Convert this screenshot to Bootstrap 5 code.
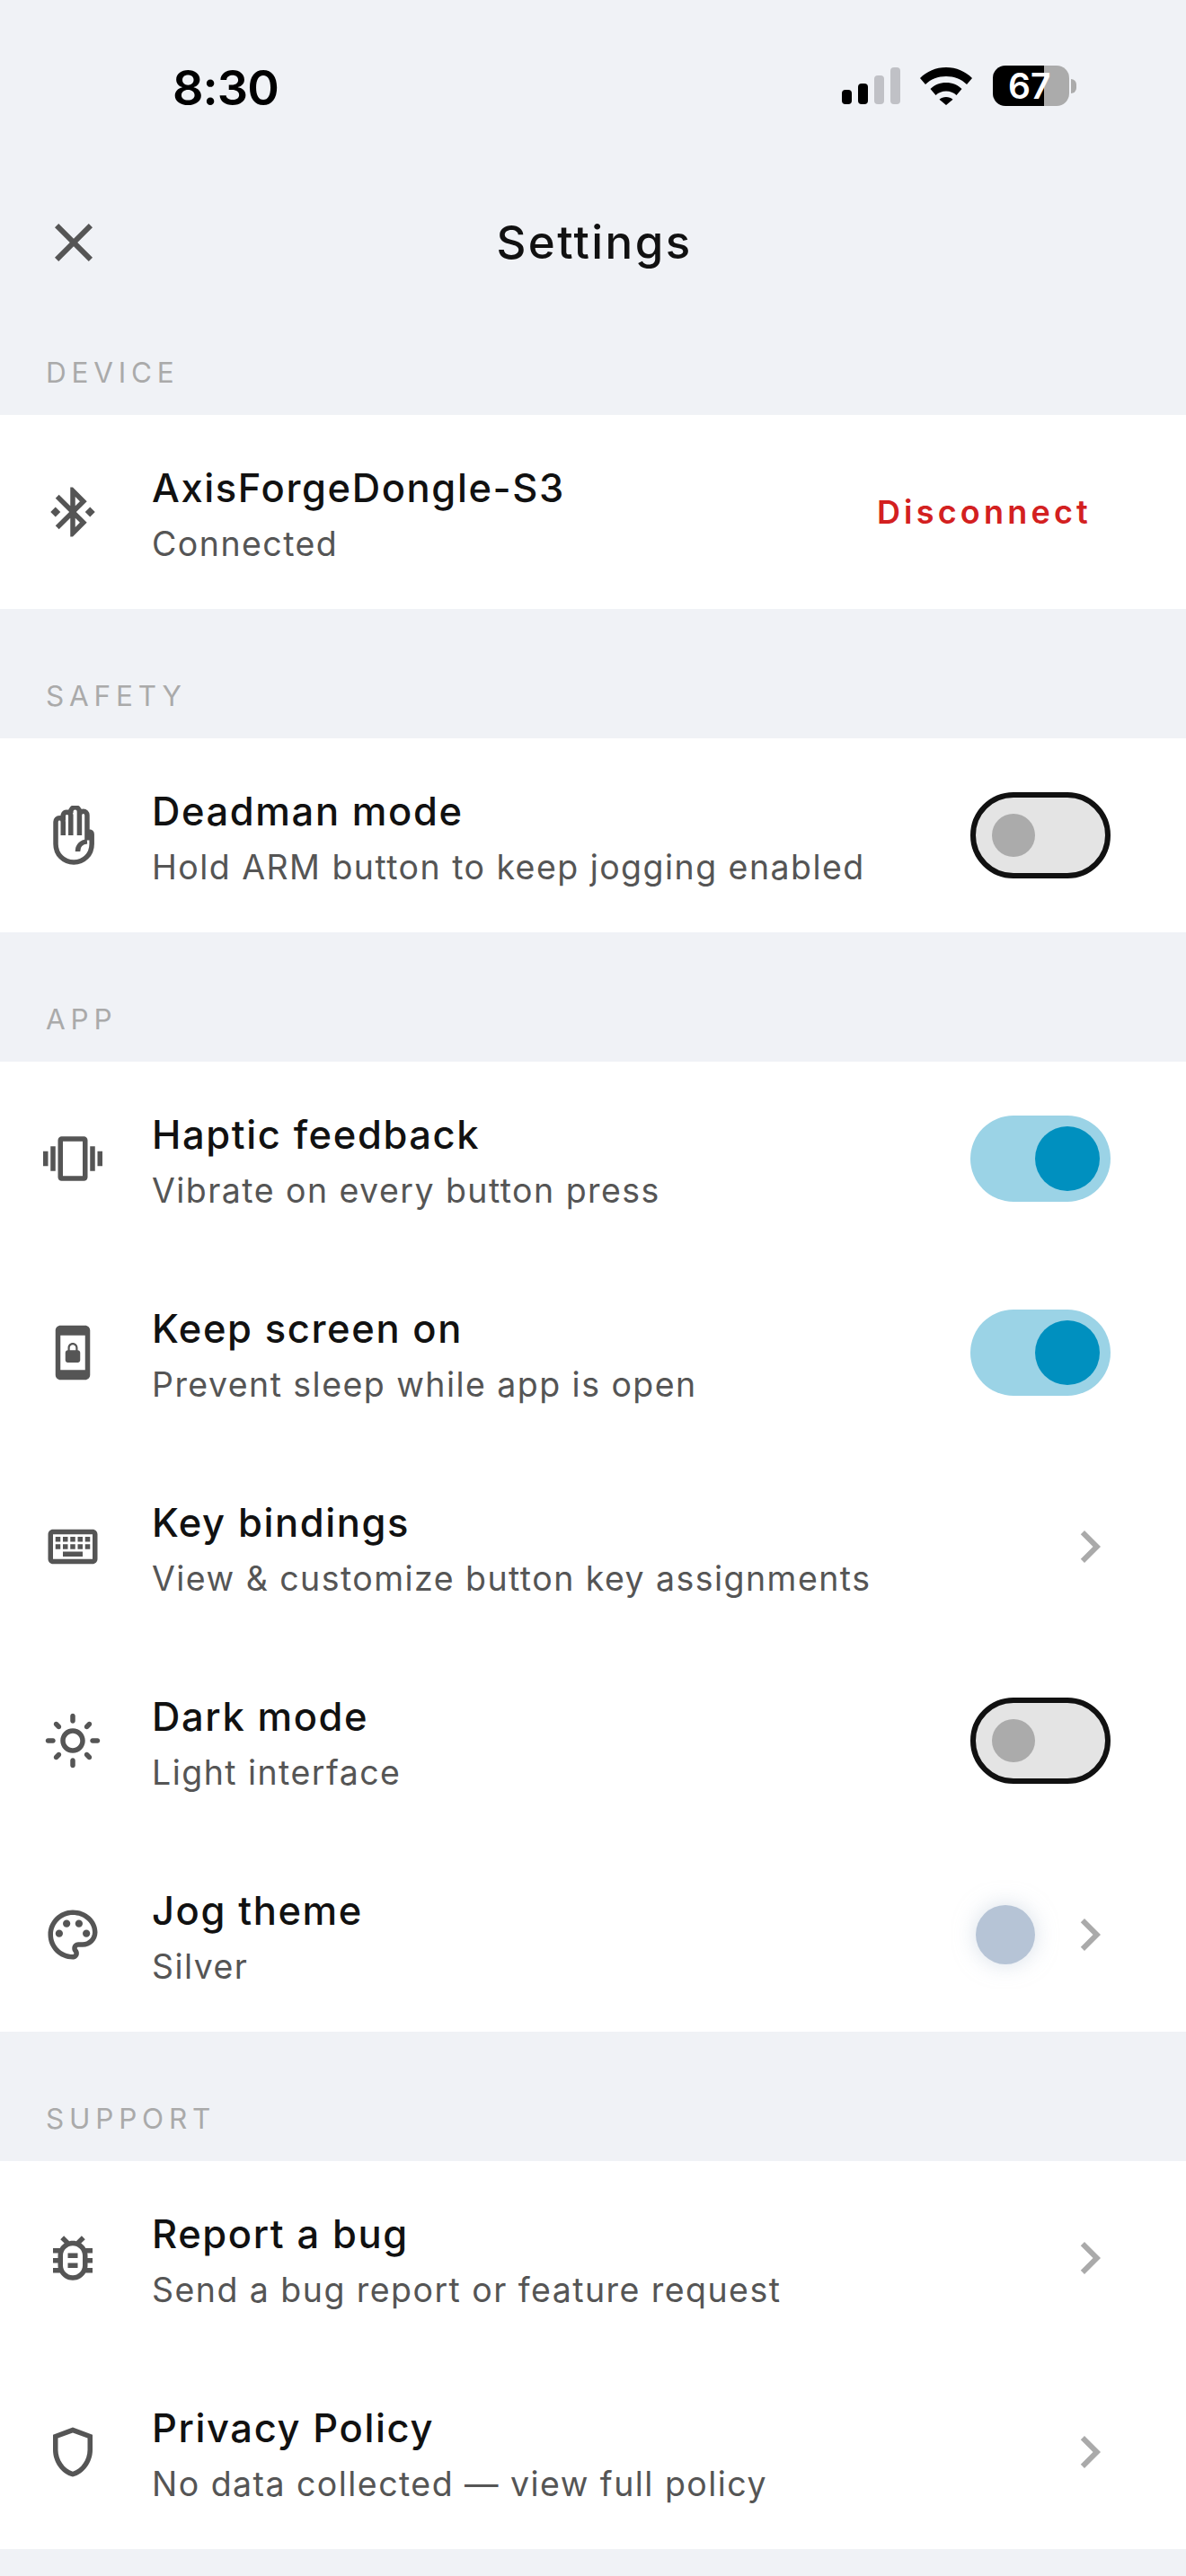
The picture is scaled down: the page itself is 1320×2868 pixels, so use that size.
<!DOCTYPE html>
<html lang="en"><head><meta charset="utf-8"><title>Settings</title>
<link href="https://cdn.jsdelivr.net/npm/bootstrap@5.3.0/dist/css/bootstrap.min.css" rel="stylesheet">
<style>
html,body{background:#f0f2f6;font-family:Inter,"Liberation Sans",sans-serif;margin:0}
.screen{width:1320px;height:2868px;overflow:hidden;background:#f0f2f6}
.statusbar{height:191px;padding:0 122px 0 192px}
.clock{font-size:54px;font-weight:600;color:#000;line-height:1;letter-spacing:-1px;padding-top:5px}
.sig{gap:7px;height:41px}
.sig i{display:block;width:11px;border-radius:4px;background:#000}
.sig i.dim{background:#c0c1c6}
.wifi{width:58px;height:42px;margin:0 23px 0 22px}
.batt{width:85px;height:45px;border-radius:14px;background:linear-gradient(90deg,#000 67%,#ababab 67%);color:#fff;font-size:39px;font-weight:600;line-height:45px;padding-left:17px}
.nub{width:6px;height:16px;border-radius:0 8px 8px 0;background:#ababab;margin-left:2px}
.topbar{height:158px;padding:0 46px}
.topbar h1{flex:1;text-align:center;font-size:51px;font-weight:500;margin:0 69px 0 0;color:#111;letter-spacing:2.4px}
.ico{width:72px;height:72px;flex:none;fill:#555}
.sect-label{height:144px;padding:0 51px 29px;font-size:31.500px;letter-spacing:5.800px;color:#aaa;line-height:36px}
.sect-first{height:113px}
.panel{background:#fff}
.item{height:216px;padding:0 71px 0 48px}
.item .lead-ico{width:66px;height:66px;flex:none;fill:#555;margin-right:55px}
.item .hand{fill:none;stroke:#555;stroke-width:2}
.txt{padding-top:5px}
.ttl{font-size:43.500px;font-weight:500;color:#111;line-height:56px;letter-spacing:1.600px}
.sub{font-size:37.500px;color:#555;line-height:50px;letter-spacing:1.450px;margin-top:10px}
.disc{font-size:36px;font-weight:600;color:#d32020;letter-spacing:4.200px;padding-right:34px}
.tog{width:156px;height:96px;border-radius:48px;margin-right:13px;flex:none}
.tog-off{background:#e4e4e4;border:6px solid #111;padding-left:18px}
.tog-off span{width:48px;height:48px;border-radius:50%;background:#ababab;display:block}
.tog-on{background:#9bd3e6;padding-right:12px}
.tog-on span{width:72px;height:72px;border-radius:50%;background:#0090bf;display:block}
.swatch{width:66px;height:66px;border-radius:50%;background:#b6c4d6;box-shadow:0 0 24px rgba(182,196,214,.55);margin-right:25px;flex:none}
.chev{fill:#aaa}
</style></head><body>
<div class="screen d-flex flex-column">
<div class="statusbar d-flex align-items-center justify-content-between">
  <div class="clock">8:30</div>
  <div class="d-flex align-items-center">
    <div class="sig d-flex align-items-end"><i style="height:16px"></i><i style="height:23px"></i><i class="dim" style="height:32px"></i><i class="dim" style="height:41px"></i></div>
    <svg class="wifi" viewBox="0 0 58 42"><path d="M29 0C17.500 0 7.500 4.500 0 12l6 7C12 13 20 10 29 10s17 3 23 9l6-7C50.500 4.500 40.500 0 29 0zM29 17c-7 0-13 2.500-17.500 7l6 7c3-3 7-4.500 11.500-4.500s8.500 1.500 11.500 4.500l6-7C42 19.500 36 17 29 17zM29 33c-3 0-5.500 1-7.500 2.800L29 42l7.500-6.200C34.500 34 32 33 29 33z"/></svg>
    <div class="batt">67</div><div class="nub"></div>
  </div>
</div>
<div class="topbar d-flex align-items-center">
  <svg class="ico" viewBox="0 0 24 24"><path d="M19 6.410 17.590 5 12 10.590 6.410 5 5 6.410 10.590 12 5 17.590 6.410 19 12 13.410 17.590 19 19 17.590 13.410 12z"/></svg>
  <h1>Settings</h1>
</div>
<div class="sect-label sect-first d-flex align-items-end">DEVICE</div>
<div class="panel">
  <div class="item d-flex align-items-center">
    <svg class="lead-ico" viewBox="0 0 24 24"><path d="M7 12l-2-2-2 2 2 2 2-2zm10.710-4.290L12 2h-1v7.590L6.410 5 5 6.410 10.590 12 5 17.590 6.410 19 11 14.410V22h1l5.710-5.710-4.300-4.290 4.300-4.290zM13 5.830l1.880 1.880L13 9.590V5.830zm1.880 10.460L13 18.170v-3.760l1.880 1.880zM19 10l-2 2 2 2 2-2-2-2z"/></svg>
    <div class="flex-grow-1 txt"><div class="ttl">AxisForgeDongle-S3</div><div class="sub">Connected</div></div>
    <div class="disc">Disconnect</div>
  </div>
</div>
<div class="sect-label d-flex align-items-end">SAFETY</div>
<div class="panel">
  <div class="item d-flex align-items-center">
    <svg class="lead-ico hand" viewBox="0 0 24 24"><path d="M14 18.500c0-2.400 1.600-3.800 3.800-4M17.800 11.500a.95.95 0 0 1 1.900 0v4c0 4.200-3.200 7.400-7.300 7.400s-7.300-3.200-7.300-7.400V6.500a1.500 1.500 0 0 1 3 0V12M8.100 6V3.800a1.600 1.600 0 0 1 3.100 0V12M11.200 3V2.400a1.700 1.700 0 0 1 3.500 0V12M14.700 3.800a1.550 1.550 0 0 1 3.100 0V14"/></svg>
    <div class="flex-grow-1 txt"><div class="ttl">Deadman mode</div><div class="sub">Hold ARM button to keep jogging enabled</div></div>
    <div class="tog tog-off d-flex align-items-center"><span></span></div>
  </div>
</div>
<div class="sect-label d-flex align-items-end">APP</div>
<div class="panel">
  <div class="item d-flex align-items-center">
    <svg class="lead-ico" viewBox="0 0 24 24"><path d="M0 15h2V9H0v6zm3 2h2V7H3v10zm19-8v6h2V9h-2zm-3 8h2V7h-2v10zM16.500 3h-9C6.670 3 6 3.670 6 4.500v15c0 .83.67 1.500 1.500 1.500h9c.83 0 1.500-.67 1.500-1.500v-15c0-.83-.67-1.500-1.500-1.500zM16 19H8V5h8v14z"/></svg>
    <div class="flex-grow-1 txt"><div class="ttl">Haptic feedback</div><div class="sub">Vibrate on every button press</div></div>
    <div class="tog tog-on d-flex align-items-center justify-content-end"><span></span></div>
  </div>
  <div class="item d-flex align-items-center">
    <svg class="lead-ico" viewBox="0 0 24 24"><path d="M10 16h4c.55 0 1-.45 1-1v-3c0-.55-.45-1-1-1v-1c0-1.110-.9-2-2-2-1.110 0-2 .9-2 2v1c-.55 0-1 .45-1 1v3c0 .55.45 1 1 1zm.8-6c0-.66.54-1.200 1.200-1.200.66 0 1.200.54 1.200 1.200v1h-2.400v-1zM17 1H7c-1.100 0-2 .9-2 2v18c0 1.100.9 2 2 2h10c1.100 0 2-.9 2-2V3c0-1.100-.9-2-2-2zm0 18H7V5h10v14z"/></svg>
    <div class="flex-grow-1 txt"><div class="ttl">Keep screen on</div><div class="sub">Prevent sleep while app is open</div></div>
    <div class="tog tog-on d-flex align-items-center justify-content-end"><span></span></div>
  </div>
  <div class="item d-flex align-items-center">
    <svg class="lead-ico" viewBox="0 0 24 24"><path d="M20 5H4c-1.100 0-1.990.9-1.990 2L2 17c0 1.100.9 2 2 2h16c1.100 0 2-.9 2-2V7c0-1.100-.9-2-2-2zm0 12H4V7h16v10zM11 8h2v2h-2zm0 3h2v2h-2zM8 8h2v2H8zm0 3h2v2H8zm-3 0h2v2H5zm0-3h2v2H5zm3 6h8v2H8zm6-3h2v2h-2zm0-3h2v2h-2zm3 3h2v2h-2zm0-3h2v2h-2z"/></svg>
    <div class="flex-grow-1 txt"><div class="ttl">Key bindings</div><div class="sub">View &amp; customize button key assignments</div></div>
    <svg class="ico chev" viewBox="0 0 24 24"><path d="M10 6 8.590 7.410 13.170 12l-4.580 4.590L10 18l6-6z"/></svg>
  </div>
  <div class="item d-flex align-items-center">
    <svg class="lead-ico" viewBox="0 0 24 24"><path d="M12 9c1.650 0 3 1.350 3 3s-1.350 3-3 3-3-1.350-3-3 1.350-3 3-3m0-2c-2.760 0-5 2.240-5 5s2.240 5 5 5 5-2.240 5-5-2.240-5-5-5zM2 13h2c.55 0 1-.45 1-1s-.45-1-1-1H2c-.55 0-1 .45-1 1s.45 1 1 1zm18 0h2c.55 0 1-.45 1-1s-.45-1-1-1h-2c-.55 0-1 .45-1 1s.45 1 1 1zM11 2v2c0 .55.45 1 1 1s1-.45 1-1V2c0-.55-.45-1-1-1s-1 .45-1 1zm0 18v2c0 .55.45 1 1 1s1-.45 1-1v-2c0-.55-.45-1-1-1s-1 .45-1 1zM5.990 4.580c-.39-.39-1.030-.39-1.410 0-.39.39-.39 1.030 0 1.410l1.060 1.060c.39.39 1.030.39 1.410 0s.39-1.030 0-1.410L5.990 4.580zm12.370 12.370c-.39-.39-1.030-.39-1.410 0-.39.39-.39 1.030 0 1.410l1.060 1.060c.39.39 1.030.39 1.410 0 .39-.39.39-1.030 0-1.410l-1.060-1.060zm1.060-10.960c.39-.39.39-1.030 0-1.410-.39-.39-1.030-.39-1.410 0l-1.060 1.060c-.39.39-.39 1.030 0 1.410s1.030.39 1.410 0l1.060-1.060zM7.050 18.360c.39-.39.39-1.030 0-1.410-.39-.39-1.030-.39-1.410 0l-1.060 1.060c-.39.39-.39 1.030 0 1.410s1.030.39 1.410 0l1.060-1.060z"/></svg>
    <div class="flex-grow-1 txt"><div class="ttl">Dark mode</div><div class="sub">Light interface</div></div>
    <div class="tog tog-off d-flex align-items-center"><span></span></div>
  </div>
  <div class="item d-flex align-items-center">
    <svg class="lead-ico" viewBox="0 0 24 24"><path d="M12 22C6.490 22 2 17.510 2 12S6.490 2 12 2s10 4.040 10 9c0 3.310-2.690 6-6 6h-1.770c-.28 0-.5.22-.5.5 0 .12.05.23.13.33.41.47.64 1.060.64 1.670 0 1.380-1.120 2.500-2.500 2.500zm0-18c-4.410 0-8 3.590-8 8s3.590 8 8 8c.28 0 .5-.22.5-.5 0-.16-.08-.28-.14-.35-.41-.46-.63-1.050-.63-1.650 0-1.380 1.120-2.500 2.500-2.500H16c2.210 0 4-1.790 4-4 0-3.860-3.590-7-8-7z"/><circle cx="6.500" cy="11.500" r="1.500"/><circle cx="9.500" cy="7.500" r="1.500"/><circle cx="14.500" cy="7.500" r="1.500"/><circle cx="17.500" cy="11.500" r="1.500"/></svg>
    <div class="flex-grow-1 txt"><div class="ttl">Jog theme</div><div class="sub">Silver</div></div>
    <div class="swatch"></div>
    <svg class="ico chev" viewBox="0 0 24 24"><path d="M10 6 8.590 7.410 13.170 12l-4.580 4.590L10 18l6-6z"/></svg>
  </div>
</div>
<div class="sect-label d-flex align-items-end">SUPPORT</div>
<div class="panel">
  <div class="item d-flex align-items-center">
    <svg class="lead-ico" viewBox="0 0 24 24"><path d="M20 8h-2.810c-.45-.78-1.070-1.450-1.820-1.960L17 4.410 15.590 3l-2.170 2.170C12.960 5.060 12.490 5 12 5s-.96.06-1.410.17L8.410 3 7 4.410l1.620 1.630C7.880 6.550 7.260 7.220 6.810 8H4v2h2.090c-.05.33-.09.66-.09 1v1H4v2h2v1c0 .34.04.67.09 1H4v2h2.810c1.040 1.790 2.970 3 5.190 3s4.150-1.210 5.190-3H20v-2h-2.090c.05-.33.09-.66.09-1v-1h2v-2h-2v-1c0-.34-.04-.67-.09-1H20V8zm-4 7c0 2.210-1.790 4-4 4s-4-1.790-4-4v-4c0-2.210 1.790-4 4-4s4 1.790 4 4v4zm-6-1h4v2h-4zm0-4h4v2h-4z"/></svg>
    <div class="flex-grow-1 txt"><div class="ttl">Report a bug</div><div class="sub">Send a bug report or feature request</div></div>
    <svg class="ico chev" viewBox="0 0 24 24"><path d="M10 6 8.590 7.410 13.170 12l-4.580 4.590L10 18l6-6z"/></svg>
  </div>
  <div class="item d-flex align-items-center">
    <svg class="lead-ico" viewBox="0 0 24 24"><path d="M12 2 4 5v6.090c0 5.050 3.410 9.760 8 10.910 4.590-1.150 8-5.860 8-10.910V5l-8-3zm6 9.090c0 4-2.550 7.700-6 8.830-3.450-1.130-6-4.820-6-8.830v-4.700l6-2.250 6 2.250v4.700z"/></svg>
    <div class="flex-grow-1 txt"><div class="ttl">Privacy Policy</div><div class="sub">No data collected — view full policy</div></div>
    <svg class="ico chev" viewBox="0 0 24 24"><path d="M10 6 8.590 7.410 13.170 12l-4.580 4.590L10 18l6-6z"/></svg>
  </div>
</div>
</div>
<script src="https://cdn.jsdelivr.net/npm/bootstrap@5.3.0/dist/js/bootstrap.bundle.min.js"></script>
</body></html>
